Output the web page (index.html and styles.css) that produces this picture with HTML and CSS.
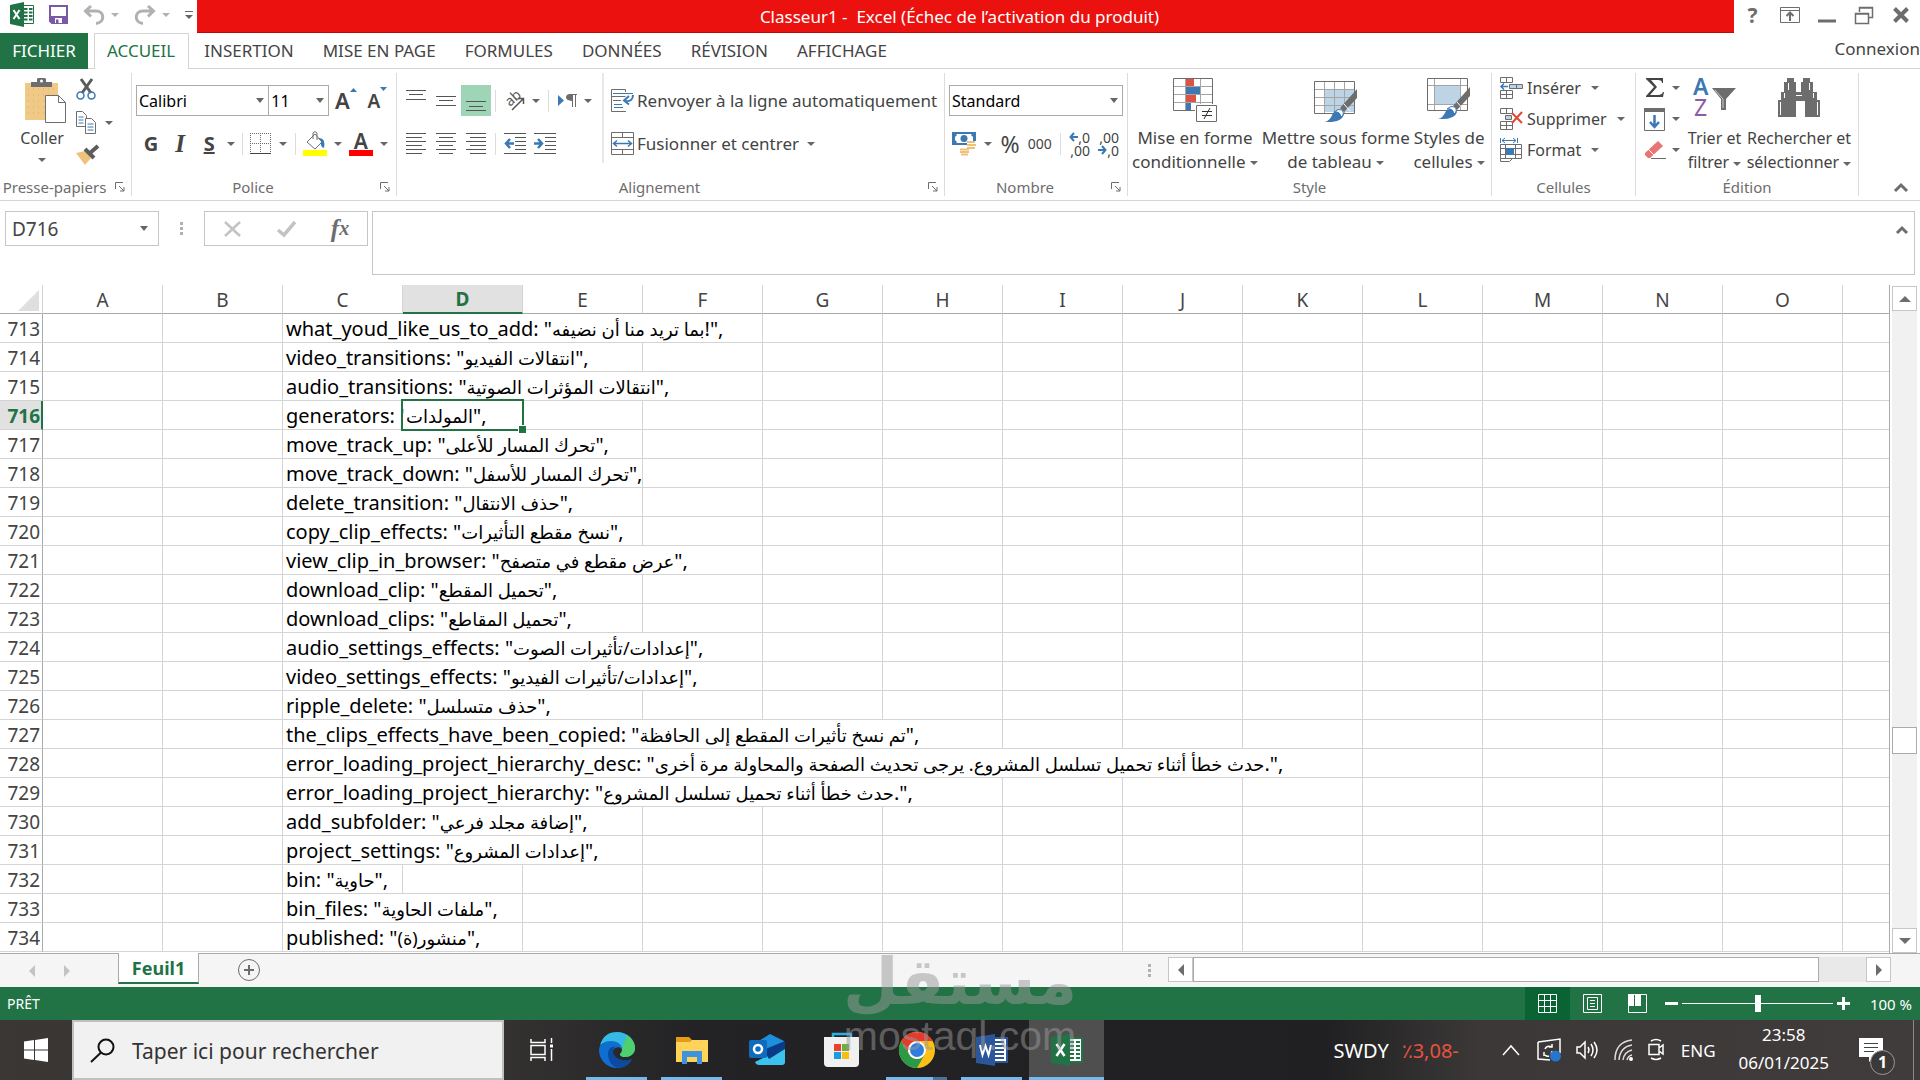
FILE: index.html
```html
<!DOCTYPE html>
<html lang="fr">
<head>
    <meta charset="UTF-8">
    <title>Classeur1 - Excel</title>
    <link rel="stylesheet" href="styles.css">
</head>
<body>
<!-- barre de titre -->
<header class="titlebar">
    <div class="quick">
        <svg width="24" height="25" viewBox="0 0 24 25"><path d="M12 3.500h11.500v18H12z" fill="#fff" stroke="#217346"/><path d="M14 7h3.500M19 7h3.500M14 10.500h3.500M19 10.500h3.500M14 14h3.500M19 14h3.500M14 17.500h3.500M19 17.500h3.500" stroke="#217346" stroke-width="2"/><path d="M0 3l14-3v25L0 22z" fill="#217346"/><path d="M3.500 8l6 9M9.500 8l-6 9" stroke="#fff" stroke-width="2"/></svg>
        <button aria-label="Enregistrer"><svg width="19" height="19" viewBox="0 0 19 19"><path d="M1 1h17v17H3l-2-2z" fill="#fff" stroke="#7b57a8" stroke-width="2"/><path d="M1 11h17v7H3l-2-2z" fill="#7b57a8"/><path d="M6 13h7v5H6z" fill="#fff"/><path d="M7 14.500h2.500V18H7z" fill="#7b57a8"/></svg></button>
        <button aria-label="Annuler"><svg width="22" height="20" viewBox="0 0 22 20"><path d="M3 6h10c9 0 9 12 0 12.500M8 1L2.500 6 8 11.500" fill="none" stroke="#b1b1b1" stroke-width="3"/></svg><i class="caret light"></i></button>
        <button aria-label="Rétablir"><svg width="22" height="20" viewBox="0 0 22 20"><path d="M19 6H9C0 6 0 18 9 18.500M14 1l5.500 5-5.500 5.500" fill="none" stroke="#b1b1b1" stroke-width="3"/></svg><i class="caret light"></i></button>
        <button aria-label="Personnaliser"><svg width="8" height="8" viewBox="0 0 8 8"><path d="M0 .500h8" stroke="#666"/><path d="M0 4h8L4 8z" fill="#666"/></svg></button>
    </div>
    <h1 class="title">Classeur1 - &nbsp;Excel (Échec de l’activation du produit)</h1>
    <div class="winbtns">
        <button class="help" aria-label="Aide">?</button>
        <button aria-label="Options du ruban"><svg width="20" height="16" viewBox="0 0 20 16"><path d="M.5.500h19v15H.5zM.5 3.500h19" fill="none" stroke="#6d6d6d"/><path d="M10 14V6M6.500 9L10 5.500 13.500 9" fill="none" stroke="#6d6d6d" stroke-width="2"/></svg></button>
        <button aria-label="Réduire"><svg width="18" height="16" viewBox="0 0 18 16"><path d="M0 14h18" stroke="#6d6d6d" stroke-width="3"/></svg></button>
        <button aria-label="Restaurer"><svg width="18" height="18" viewBox="0 0 18 18"><path d="M4.500 6V1.500h13v10H14M4.500 2h13M.5 7.500h13v10H.5zM.5 8h13" fill="none" stroke="#6d6d6d" stroke-width="1.500"/></svg></button>
        <button aria-label="Fermer"><svg width="16" height="16" viewBox="0 0 16 16"><path d="M1.500 1.500l13 13M14.500 1.500l-13 13" stroke="#6d6d6d" stroke-width="4"/></svg></button>
    </div>
</header>

<nav class="tabs">
    <a class="file" href="#">FICHIER</a>
    <a class="active" href="#">ACCUEIL</a>
    <a href="#">INSERTION</a>
    <a href="#">MISE EN PAGE</a>
    <a href="#">FORMULES</a>
    <a href="#">DONNÉES</a>
    <a href="#">RÉVISION</a>
    <a href="#">AFFICHAGE</a>
    <a class="login" href="#">Connexion</a>
</nav>

<!-- ruban -->
<div class="ribbon">
    <section class="group g-clip">
        <div class="body">
            <button class="big paste">
                <svg width="42" height="46" viewBox="0 0 42 46"><path d="M0 6h33v37H0z" fill="#f0c987"/><path d="M3 12h28M3 18h28M3 24h16M3 30h16M3 36h16" stroke="#d9ab62" stroke-dasharray="1 4"/><path d="M6 10V5h6V2q0-1 2-1h5q2 0 2 1v3h6v5z" fill="#6d6d6d"/><circle cx="16.500" cy="4" r="1.500" fill="#fff"/><path d="M20.500 18.500h13l7 7v20h-20z" fill="#fff" stroke="#6d6d6d"/><path d="M33.500 18.500v7h7" fill="none" stroke="#6d6d6d"/></svg>
                <span>Coller</span>
                <i class="caret"></i>
            </button>
            <div class="clip-tools">
                <button aria-label="Couper"><svg width="22" height="23" viewBox="0 0 22 23"><path d="M5 1l10 14M16 1L6 15" stroke="#5c5c5c" stroke-width="3"/><circle cx="4.500" cy="17.500" r="3.500" fill="none" stroke="#3c78b4" stroke-width="1.500"/><circle cx="15.500" cy="17.500" r="3.500" fill="none" stroke="#3c78b4" stroke-width="1.500"/></svg></button>
                <button aria-label="Copier"><svg width="22" height="23" viewBox="0 0 22 23"><path d="M.5.500h6l4 4v11H.5z" fill="#fff" stroke="#6d6d6d"/><path d="M2.500 6h5M2.500 9h5M2.500 12h5" stroke="#3c78b4"/><path d="M9.500 7.500h6l4 4v11h-10z" fill="#fff" stroke="#6d6d6d"/><path d="M11.500 13h6M11.500 16h6M11.500 19h6" stroke="#3c78b4"/></svg><i class="caret"></i></button>
                <button aria-label="Reproduire la mise en forme"><svg width="23" height="21" viewBox="0 0 23 21"><path d="M0 9l9-2 6 7-6 7z" fill="#efc27b"/><path d="M9 5l9 9M14 9l8-7" fill="none" stroke="#5c5c5c" stroke-width="4"/></svg></button>
            </div>
        </div>
        <footer><span>Presse-papiers</span><button class="launcher" aria-label="Plus"><svg width="10" height="10" viewBox="0 0 10 10"><path d="M.5 7V.500H8M4 4l5 5M9 5v4H5" fill="none" stroke="#6d6d6d"/></svg></button></footer>
    </section>

    <section class="group g-font">
        <div class="rows">
            <div class="row">
                <select class="s-font" aria-label="Police"><option>Calibri</option></select><select class="s-size" aria-label="Taille"><option>11</option></select>
                <button class="fsize" aria-label="Agrandir la police">A<svg width="7" height="4" viewBox="0 0 7 4"><path d="M0 4h7L3.500 0z" fill="#3c78b4"/></svg></button>
                <button class="fsize small" aria-label="Réduire la police">A<svg width="7" height="4" viewBox="0 0 7 4"><path d="M0 0h7L3.500 4z" fill="#3c78b4"/></svg></button>
            </div>
            <div class="row tight">
                <button class="t b">G</button>
                <button class="t it">I</button>
                <button class="t un">S</button>
                <i class="caret"></i>
                <i class="sep"></i>
                <button aria-label="Bordures"><svg width="22" height="22" viewBox="0 0 22 22"><path d="M.5 0v20M20.500 0v20M0 .500h21M0 10.500h21M10.500 0v20" stroke="#6d6d6d" stroke-dasharray="1 1"/><path d="M0 20.500h21" stroke="#444"/></svg></button>
                <i class="caret"></i>
                <i class="sep"></i>
                <button aria-label="Remplissage"><svg width="24" height="25" viewBox="0 0 24 25"><path d="M4 11l8-8 7 8-7 7z" fill="#fff" stroke="#6d6d6d"/><path d="M10 8V2q2-3 4 0v7" fill="none" stroke="#6d6d6d"/><path d="M15 7q8-1 6 10-4-1-3-7z" fill="#3c78b4"/><path d="M0 19h24v6H0z" fill="#ff0"/></svg></button>
                <i class="caret"></i>
                <button class="fcolor" aria-label="Couleur de police">A</button>
                <i class="caret"></i>
            </div>
        </div>
        <footer><span>Police</span><button class="launcher" aria-label="Plus"><svg width="10" height="10" viewBox="0 0 10 10"><path d="M.5 7V.500H8M4 4l5 5M9 5v4H5" fill="none" stroke="#6d6d6d"/></svg></button></footer>
    </section>

    <section class="group g-align">
        <div class="body">
            <div class="rows left">
                <div class="row">
                    <button class="al" aria-label="Haut"><svg width="20" height="22" viewBox="0 0 20 22"><path d="M0 .500h20M3 4.500h14M0 9.500h20" stroke="#555"/></svg></button>
                    <button class="al" aria-label="Milieu"><svg width="20" height="22" viewBox="0 0 20 22"><path d="M0 6.500h20M3 10.500h14M0 15.500h20" stroke="#555"/></svg></button>
                    <button class="al on" aria-label="Bas"><svg width="20" height="22" viewBox="0 0 20 22"><path d="M0 11.500h20M3 16.500h14M0 20.500h20" stroke="#555"/></svg></button>
                    <i class="sep"></i>
                    <button class="ic" aria-label="Orientation"><svg width="22" height="22" viewBox="0 0 22 22"><text x="0" y="0" transform="translate(6 17) rotate(-42)" font-size="14" fill="#555">ab</text><path d="M8 20L19 9M14 8.500h5.500V14" fill="none" stroke="#555" stroke-width="1.500"/></svg><i class="caret"></i></button>
                    <i class="sep"></i>
                    <button class="ic" aria-label="Sens du texte"><svg width="20" height="14" viewBox="0 0 20 14"><path d="M0 1v11l6-5.500z" fill="#3c78b4"/><path d="M12 0h7v1h-1v12h-1V1h-2v12h-1V7Q8 6 8 3.500 8 0 12 0z" fill="#6d6d6d"/></svg><i class="caret"></i></button>
                </div>
                <div class="row">
                    <button class="al" aria-label="Gauche"><svg width="20" height="22" viewBox="0 0 20 22"><path d="M0 .500h20M0 4.500h16M0 8.500h20M0 12.500h16M0 16.500h20M0 20.500h16" stroke="#555"/></svg></button>
                    <button class="al" aria-label="Centre"><svg width="20" height="22" viewBox="0 0 20 22"><path d="M0 .500h20M3 4.500h14M0 8.500h20M3 12.500h14M0 16.500h20M3 20.500h14" stroke="#555"/></svg></button>
                    <button class="al" aria-label="Droite"><svg width="20" height="22" viewBox="0 0 20 22"><path d="M0 .500h20M4 4.500h16M0 8.500h20M4 12.500h16M0 16.500h20M4 20.500h16" stroke="#555"/></svg></button>
                    <i class="sep"></i>
                    <button class="al" aria-label="Diminuer le retrait"><svg width="22" height="22" viewBox="0 0 22 22"><path d="M0 .500h22M11 4.500h11M11 8.500h11M11 12.500h11M11 16.500h11M0 20.500h22" stroke="#555"/><path d="M10 10.500H3M6 6l-4 4.500L6 15" fill="none" stroke="#3c78b4" stroke-width="2.500"/></svg></button>
                    <button class="al" aria-label="Augmenter le retrait"><svg width="22" height="22" viewBox="0 0 22 22"><path d="M0 .500h22M11 4.500h11M11 8.500h11M11 12.500h11M11 16.500h11M0 20.500h22" stroke="#555"/><path d="M0 10.500h7M4 6l4 4.500L4 15" fill="none" stroke="#3c78b4" stroke-width="2.500"/></svg></button>
                </div>
            </div>
            <div class="rows right">
                <button class="row lbl"><svg width="24" height="24" viewBox="0 0 24 24"><path d="M15 22.500H.5V.500h14V3M.5 7.500h14" fill="none" stroke="#6d6d6d"/><path d="M2 4.500h20" stroke="#3c78b4"/><path d="M3 15.500h8M3 18.500h9" stroke="#3c78b4"/><path d="M2 11.500h8" stroke="#6d6d6d"/><path d="M22 6q0 7-8 6M18 7l-5 4.500 5 4" fill="none" stroke="#3c78b4" stroke-width="2"/></svg>Renvoyer à la ligne automatiquement</button>
                <button class="row lbl"><svg width="24" height="24" viewBox="0 0 24 24"><path d="M.5.500h22v22H.5zM.5 5.500h22M.5 17.500h22M11.500 0v5M11.500 18v5" fill="none" stroke="#6d6d6d"/><path d="M3 11.500h17M6 8.500l-3.500 3L6 14.500M17 8.500l3.500 3-3.500 3" fill="none" stroke="#3c78b4" stroke-width="1.500"/></svg>Fusionner et centrer<i class="caret"></i></button>
            </div>
        </div>
        <footer><span>Alignement</span><button class="launcher" aria-label="Plus"><svg width="10" height="10" viewBox="0 0 10 10"><path d="M.5 7V.500H8M4 4l5 5M9 5v4H5" fill="none" stroke="#6d6d6d"/></svg></button></footer>
    </section>

    <section class="group g-num">
        <div class="rows">
            <div class="row"><select class="s-num" aria-label="Format de nombre"><option>Standard</option></select></div>
            <div class="row tight num">
                <button aria-label="Format monétaire"><svg width="24" height="24" viewBox="0 0 24 24"><path d="M0 0h24v13H0z" fill="#3c78b4"/><path d="M3 2h18v9H3z" fill="#fff"/><path d="M1 1l3 3M23 1l-3 3M1 12l3-3" stroke="#3c78b4" stroke-width="3"/><circle cx="12" cy="6.500" r="3.500" fill="#3c78b4"/><path d="M15 9h9v9h-9zM8 16h9v7H8z" fill="#fff"/><path d="M15 10h8M15 13h9M15 16h8M8 17.500h9M8 20h9M9 22.500h7" stroke="#efc078" stroke-width="2"/></svg></button>
                <i class="caret"></i>
                <button class="pct">%</button>
                <button class="mil">000</button>
                <i class="sep"></i>
                <button class="dec" aria-label="Ajouter une décimale"><span><svg width="9" height="8" viewBox="0 0 9 8"><path d="M9 4H2M5 0L1.500 4 5 8" fill="none" stroke="#3c78b4" stroke-width="2"/></svg>,0</span><span>,00</span></button>
                <button class="dec" aria-label="Réduire les décimales"><span>,00</span><span><svg width="9" height="8" viewBox="0 0 9 8"><path d="M0 4h7M4 0l3.500 4L4 8" fill="none" stroke="#3c78b4" stroke-width="2"/></svg>,0</span></button>
            </div>
        </div>
        <footer><span>Nombre</span><button class="launcher" aria-label="Plus"><svg width="10" height="10" viewBox="0 0 10 10"><path d="M.5 7V.500H8M4 4l5 5M9 5v4H5" fill="none" stroke="#6d6d6d"/></svg></button></footer>
    </section>

    <section class="group g-style">
        <div class="body">
            <button class="big">
                <svg width="44" height="46" viewBox="0 0 44 46"><path d="M.5 1.500h39v32H.5z" fill="#fff"/><path d="M.5 9.500h39M.5 17.500h39M.5 25.500h39M12.500 1v33M27.500 1v33" stroke="#a5a5a5"/><path d="M13 2h8v7h-8zM13 18h10v7H13z" fill="#dd5240"/><path d="M13 10h14v7H13zM13 26h5v7h-5z" fill="#3c78b4"/><path d="M.5 1.500h39v32H.5z" fill="none" stroke="#6d6d6d"/><path d="M22 27h22v19H22z" fill="#fff"/><path d="M23.500 28.500h20v16h-20z" fill="#fff" stroke="#6d6d6d"/><path d="M29 34.500h10M29 38.500h10M37 31l-6 11" stroke="#333"/></svg>
                <span>Mise en forme</span><span>conditionnelle <i class="caret"></i></span>
            </button>
            <button class="big">
                <svg width="44" height="46" viewBox="0 0 44 46"><path d="M10 12h30v23H10z" fill="#bdd3e6"/><path d="M.5 12.500h40M.5 20.500h40M.5 28.500h40M10.500 4v32M20.500 4v32M30.500 4v32" stroke="#a5a5a5"/><path d="M.5 4.500h40v32H.5z" fill="none" stroke="#6d6d6d"/><path d="M43 12v9L30 35l-4-4z" fill="#6d6d6d"/><path d="M30 27l6 7" stroke="#fff"/><path d="M11 45q5-1 8-9 7-6 11 1-2 9-19 8z" fill="#3c78b4"/><path d="M20 35q4-4 8-2 3 4-1 7-1-6-7-5z" fill="#fff" stroke="#3c78b4"/></svg>
                <span>Mettre sous forme</span><span>de tableau <i class="caret"></i></span>
            </button>
            <button class="big">
                <svg width="44" height="46" viewBox="0 0 44 46"><path d="M8 9h25v18H8z" fill="#bdd3e6"/><path d="M.5 8.500h40M.5 27.500h40M7.500 2v32M33.500 2v32" stroke="#a5a5a5"/><path d="M.5 1.500h40v32H.5z" fill="none" stroke="#6d6d6d"/><path d="M43 10v9L30 33l-4-4z" fill="#6d6d6d"/><path d="M30 25l6 7" stroke="#fff"/><path d="M11 42q5-1 8-8 7-6 11 1-2 8-19 7z" fill="#3c78b4"/><path d="M20 32q4-4 8-2 3 4-1 7-1-6-7-5z" fill="#fff" stroke="#3c78b4"/></svg>
                <span>Styles de</span><span>cellules <i class="caret"></i></span>
            </button>
        </div>
        <footer><span>Style</span></footer>
    </section>

    <section class="group g-cells">
        <div class="list">
            <button><svg width="23" height="23" viewBox="0 0 23 23"><path d="M.5.500h12v5H.5zM6.500 0v6M.5 13.500h12v8H.5zM6.500 13v9M0 17.500h12" fill="none" stroke="#6d6d6d"/><path d="M9.500 7.500h13v4h-13zM16.500 7v5" fill="#bdd3e6" stroke="#6d6d6d"/><path d="M8 9.500H1M4 6.500l-3 3 3 3" fill="none" stroke="#3c78b4" stroke-width="1.500"/></svg>Insérer<i class="caret"></i></button>
            <button><svg width="23" height="23" viewBox="0 0 23 23"><path d="M.5.500h12v5H.5zM6.500 0v6M.5 13.500h12v8H.5zM6.500 13v9M0 17.500h12" fill="none" stroke="#6d6d6d"/><path d="M5.500 7.500h6v4h-6z" fill="#bdd3e6" stroke="#6d6d6d"/><path d="M12 5l10 10M22 4L12 15" stroke="#e04a35" stroke-width="2"/></svg>Supprimer<i class="caret"></i></button>
            <button><svg width="23" height="24" viewBox="0 0 23 24"><path d="M.5 0v5M17.500 0v5M2 2.500h14M5 0L2 2.500 5 5M13 0l3 2.500L13 5" fill="none" stroke="#3c78b4"/><path d="M.5 6.500h21v14H.5zM5.500 6v14M15.500 6v14M0 10.500h21M0 16.500h21" fill="none" stroke="#6d6d6d"/><path d="M6 10h8v7H6z" fill="#3c78b4"/><path d="M.5 21v2.500h9l3-3" fill="none" stroke="#6d6d6d"/></svg>Format<i class="caret"></i></button>
        </div>
        <footer><span>Cellules</span></footer>
    </section>

    <section class="group g-edit">
        <div class="body">
            <div class="list">
                <button aria-label="Somme"><svg width="22" height="22" viewBox="0 0 22 22"><path d="M2 1h17v5h-1q0-3-4-3H7l6 7-7 8h8q4 0 5-3h1l-1 5H2v-1l8-9-8-8z" fill="#444"/></svg><i class="caret"></i></button>
                <button aria-label="Remplissage"><svg width="22" height="23" viewBox="0 0 22 23"><path d="M.5.500h20v22H.5z" fill="#fff" stroke="#6d6d6d"/><path d="M0 0h21v4H0z" fill="#6d6d6d"/><path d="M10.500 7v12M6 14l4.500 5 4.500-5" fill="none" stroke="#3c78b4" stroke-width="2.500"/></svg><i class="caret"></i></button>
                <button aria-label="Effacer"><svg width="22" height="20" viewBox="0 0 22 20"><path d="M1 13L14 1l5 5L6 18H4l-3-3z" fill="#e87474"/><path d="M4 9l6 6" stroke="#fff"/><path d="M7 18.500h15" stroke="#6d6d6d"/></svg><i class="caret"></i></button>
            </div>
            <button class="big az">
                <svg width="44" height="46" viewBox="0 0 44 46"><text x="0" y="18" font-size="23" font-weight="600" fill="#3c78b4">A</text><text x="1" y="39" font-size="23" fill="#8d5ba5">Z</text><path d="M19 11h24L33 22v11h-5V22z" fill="#6d6d6d"/><path d="M22 13l8 9v9" fill="none" stroke="#ccc"/></svg>
                <span>Trier et</span><span>filtrer <i class="caret"></i></span>
            </button>
            <button class="big find">
                <svg width="44" height="46" viewBox="0 0 44 46"><path d="M10 1h7v4h2v10h5V5h2V1h7v4h3v10h4v8h3v17H28V24h-4-5v16H1V23h3v-8h3V5h3z" fill="#6d6d6d"/><path d="M3.500 25v13M40.500 25v13M7.500 16v5M36.500 16v5M11.500 6v7M32.500 6v7M19 18.500h6" stroke="#fff"/></svg>
                <span>Rechercher et</span><span>sélectionner <i class="caret"></i></span>
            </button>
        </div>
        <footer><span>Édition</span></footer>
    </section>
    <button class="collapse" aria-label="Réduire le ruban"><svg width="14" height="9" viewBox="0 0 14 9"><path d="M1 8l6-6 6 6" fill="none" stroke="#6d6d6d" stroke-width="3"/></svg></button>
</div>

<!-- barre de formule -->
<div class="formulabar">
    <select class="namebox" aria-label="Zone Nom"><option>D716</option></select>
    <i class="dots"></i>
    <div class="fbtns">
        <button aria-label="Annuler"><svg width="17" height="16" viewBox="0 0 17 16"><path d="M1 1l15 14M16 1L1 15" stroke="#c3c3c3" stroke-width="2.500"/></svg></button>
        <button aria-label="Entrer"><svg width="19" height="16" viewBox="0 0 19 16"><path d="M1 9l6 5L18 1" fill="none" stroke="#c3c3c3" stroke-width="3.500"/></svg></button>
        <button class="fx" aria-label="Insérer une fonction">f<small>x</small></button>
    </div>
    <div class="finput">
        <textarea aria-label="Barre de formule"></textarea>
        <button aria-label="Réduire la barre"><svg width="12" height="9" viewBox="0 0 12 9"><path d="M1 8l5-5 5 5" fill="none" stroke="#6d6d6d" stroke-width="3"/></svg></button>
    </div>
</div>

<!-- feuille -->
<main class="sheet">
    <div class="grid">
        <table>
            <colgroup><col class="c-num"><col span="15" class="c-cell"><col></colgroup>
            <thead>
            <tr><th class="corner"><svg width="21" height="21" viewBox="0 0 21 21"><path d="M21 0v21H0z" fill="#dfdfdf"/></svg></th><th>A</th><th>B</th><th>C</th><th class="sel">D</th><th>E</th><th>F</th><th>G</th><th>H</th><th>I</th><th>J</th><th>K</th><th>L</th><th>M</th><th>N</th><th>O</th><th></th></tr>
            </thead>
            <tbody>
            <tr><th>713</th><td></td><td></td><td colspan="4">what_youd_like_us_to_add: "<span class="ar">بما تريد منا أن نضيفه</span>!",</td><td></td><td></td><td></td><td></td><td></td><td></td><td></td><td></td><td></td><td></td></tr>
            <tr><th>714</th><td></td><td></td><td colspan="3">video_transitions: "<span class="ar">انتقالات الفيديو</span>",</td><td></td><td></td><td></td><td></td><td></td><td></td><td></td><td></td><td></td><td></td><td></td></tr>
            <tr><th>715</th><td></td><td></td><td colspan="4">audio_transitions: "<span class="ar">انتقالات المؤثرات الصوتية</span>",</td><td></td><td></td><td></td><td></td><td></td><td></td><td></td><td></td><td></td><td></td></tr>
            <tr><th class="sel">716</th><td></td><td></td><td>generators: '</td><td class="cursor"><span class="ar">المولدات</span>",</td><td></td><td></td><td></td><td></td><td></td><td></td><td></td><td></td><td></td><td></td><td></td><td></td></tr>
            <tr><th>717</th><td></td><td></td><td colspan="3">move_track_up: "<span class="ar">تحرك المسار للأعلى</span>",</td><td></td><td></td><td></td><td></td><td></td><td></td><td></td><td></td><td></td><td></td><td></td></tr>
            <tr><th>718</th><td></td><td></td><td colspan="3">move_track_down: "<span class="ar">تحرك المسار للأسفل</span>",</td><td></td><td></td><td></td><td></td><td></td><td></td><td></td><td></td><td></td><td></td><td></td></tr>
            <tr><th>719</th><td></td><td></td><td colspan="3">delete_transition: "<span class="ar">حذف الانتقال</span>",</td><td></td><td></td><td></td><td></td><td></td><td></td><td></td><td></td><td></td><td></td><td></td></tr>
            <tr><th>720</th><td></td><td></td><td colspan="3">copy_clip_effects: "<span class="ar">نسخ مقطع التأثيرات</span>",</td><td></td><td></td><td></td><td></td><td></td><td></td><td></td><td></td><td></td><td></td><td></td></tr>
            <tr><th>721</th><td></td><td></td><td colspan="4">view_clip_in_browser: "<span class="ar">عرض مقطع في متصفح</span>",</td><td></td><td></td><td></td><td></td><td></td><td></td><td></td><td></td><td></td><td></td></tr>
            <tr><th>722</th><td></td><td></td><td colspan="3">download_clip: "<span class="ar">تحميل المقطع</span>",</td><td></td><td></td><td></td><td></td><td></td><td></td><td></td><td></td><td></td><td></td><td></td></tr>
            <tr><th>723</th><td></td><td></td><td colspan="3">download_clips: "<span class="ar">تحميل المقاطع</span>",</td><td></td><td></td><td></td><td></td><td></td><td></td><td></td><td></td><td></td><td></td><td></td></tr>
            <tr><th>724</th><td></td><td></td><td colspan="4">audio_settings_effects: "<span class="ar">إعدادات/تأثيرات الصوت</span>",</td><td></td><td></td><td></td><td></td><td></td><td></td><td></td><td></td><td></td><td></td></tr>
            <tr><th>725</th><td></td><td></td><td colspan="4">video_settings_effects: "<span class="ar">إعدادات/تأثيرات الفيديو</span>",</td><td></td><td></td><td></td><td></td><td></td><td></td><td></td><td></td><td></td><td></td></tr>
            <tr><th>726</th><td></td><td></td><td colspan="3">ripple_delete: "<span class="ar">حذف متسلسل</span>",</td><td></td><td></td><td></td><td></td><td></td><td></td><td></td><td></td><td></td><td></td><td></td></tr>
            <tr><th>727</th><td></td><td></td><td colspan="6">the_clips_effects_have_been_copied: "<span class="ar">تم نسخ تأثيرات المقطع إلى الحافظة</span>",</td><td></td><td></td><td></td><td></td><td></td><td></td><td></td><td></td></tr>
            <tr><th>728</th><td></td><td></td><td colspan="9">error_loading_project_hierarchy_desc: "<span class="ar">حدث خطأ أثناء تحميل تسلسل المشروع. يرجى تحديث الصفحة والمحاولة مرة أخرى</span>.",</td><td></td><td></td><td></td><td></td><td></td></tr>
            <tr><th>729</th><td></td><td></td><td colspan="6">error_loading_project_hierarchy: "<span class="ar">حدث خطأ أثناء تحميل تسلسل المشروع</span>.",</td><td></td><td></td><td></td><td></td><td></td><td></td><td></td><td></td></tr>
            <tr><th>730</th><td></td><td></td><td colspan="3">add_subfolder: "<span class="ar">إضافة مجلد فرعي</span>",</td><td></td><td></td><td></td><td></td><td></td><td></td><td></td><td></td><td></td><td></td><td></td></tr>
            <tr><th>731</th><td></td><td></td><td colspan="3">project_settings: "<span class="ar">إعدادات المشروع</span>",</td><td></td><td></td><td></td><td></td><td></td><td></td><td></td><td></td><td></td><td></td><td></td></tr>
            <tr><th>732</th><td></td><td></td><td>bin: "<span class="ar">حاوية</span>",</td><td></td><td></td><td></td><td></td><td></td><td></td><td></td><td></td><td></td><td></td><td></td><td></td><td></td></tr>
            <tr><th>733</th><td></td><td></td><td colspan="2">bin_files: "<span class="ar">ملفات الحاوية</span>",</td><td></td><td></td><td></td><td></td><td></td><td></td><td></td><td></td><td></td><td></td><td></td><td></td></tr>
            <tr><th>734</th><td></td><td></td><td colspan="2">published: "<span class="ar">منشور(ة)</span>",</td><td></td><td></td><td></td><td></td><td></td><td></td><td></td><td></td><td></td><td></td><td></td><td></td></tr>
            </tbody>
        </table>
    </div>
    <div class="vscroll">
        <button aria-label="Haut"><svg width="12" height="6" viewBox="0 0 12 6"><path d="M0 6h12L6 0z" fill="#6d6d6d"/></svg></button>
        <div class="track"><div class="thumb"></div></div>
        <button aria-label="Bas"><svg width="12" height="6" viewBox="0 0 12 6"><path d="M0 0h12L6 6z" fill="#6d6d6d"/></svg></button>
    </div>
</main>

<div class="sheetbar">
    <div class="sheetnav">
        <button aria-label="Précédent"><svg width="6" height="12" viewBox="0 0 6 12"><path d="M6 0v12L0 6z" fill="#c3c3c3"/></svg></button>
        <button aria-label="Suivant"><svg width="6" height="12" viewBox="0 0 6 12"><path d="M0 0v12l6-6z" fill="#c3c3c3"/></svg></button>
    </div>
    <a class="sheettab" href="#">Feuil1</a>
    <button class="add" aria-label="Nouvelle feuille"><svg width="24" height="24" viewBox="0 0 24 24"><circle cx="12" cy="12" r="10.500" fill="none" stroke="#6d6d6d"/><path d="M12 7v10M7 12h10" stroke="#6d6d6d" stroke-width="2"/></svg></button>
    <i class="dots"></i>
    <div class="hscroll">
        <button aria-label="Gauche"><svg width="6" height="12" viewBox="0 0 6 12"><path d="M6 0v12L0 6z" fill="#6d6d6d"/></svg></button>
        <div class="track"><div class="thumb"></div></div>
        <button aria-label="Droite"><svg width="6" height="12" viewBox="0 0 6 12"><path d="M0 0v12l6-6z" fill="#6d6d6d"/></svg></button>
    </div>
</div>

<div class="statusbar">
    <span>PRÊT</span>
    <div class="views">
        <button class="on" aria-label="Normal"><svg width="19" height="19" viewBox="0 0 19 19"><path d="M.5.500h18v18H.5zM6.500 0v19M12.500 0v19M0 6.500h19M0 12.500h19" fill="none" stroke="#fff"/></svg></button>
        <button aria-label="Mise en page"><svg width="19" height="19" viewBox="0 0 19 19"><path d="M.5.500h18v18H.5zM4.500 3.500h10v12h-10zM7 6.500h5M7 9.500h5M7 12.500h5" fill="none" stroke="#fff"/></svg></button>
        <button aria-label="Sauts de page"><svg width="19" height="19" viewBox="0 0 19 19"><path d="M.5.500h18v18H.5z" fill="none" stroke="#fff"/><path d="M0 0h6v12H0zM7 0h6v12H7z" fill="#fff"/></svg></button>
    </div>
    <div class="zoom">
        <button aria-label="Zoom arrière"><svg width="13" height="13" viewBox="0 0 13 13"><path d="M0 6.500h13" stroke="#fff" stroke-width="3"/></svg></button>
        <input type="range" aria-label="Zoom" min="0" max="100" value="50">
        <button aria-label="Zoom avant"><svg width="13" height="13" viewBox="0 0 13 13"><path d="M0 6.500h13M6.500 0v13" stroke="#fff" stroke-width="3"/></svg></button>
    </div>
    <span class="pc">100 %</span>
</div>

<!-- barre des tâches -->
<div class="taskbar">
    <button class="start" aria-label="Démarrer"><svg width="24" height="24" viewBox="0 0 24 24"><path d="M0 3.500L10 2v9.500H0zM11 1.900L24 0v11.500H11zM0 12.500h10V22L0 20.500zM11 12.500h13V24l-13-1.900z" fill="#fff"/></svg></button>
    <label class="search"><svg width="25" height="25" viewBox="0 0 25 25"><circle cx="16" cy="9" r="7.500" fill="none" stroke="#111" stroke-width="2"/><path d="M11 14.500L1 24" stroke="#111" stroke-width="2"/></svg><input type="text" placeholder="Taper ici pour rechercher" aria-label="Rechercher"></label>
    <button class="taskview" aria-label="Affichage des tâches"><svg width="24" height="24" viewBox="0 0 24 24"><path d="M1 1v3.500h14V1M1 7.500h14v9H1zM1 23v-3.500h14V23M21.500 0v5M21.500 11v12" fill="none" stroke="#fff" stroke-width="1.500"/><path d="M20 6.500h3v3h-3z" fill="#fff"/></svg></button>
    <div class="apps">
        <button class="open" aria-label="Edge"><svg width="36" height="36" viewBox="0 0 36 36"><path d="M1 13Q5 0 18 0c11 0 18 8 18 16 0 6-5 9-10 9-4 0-5-2-5-3 1-1 2-2 2-4 0-5-5-8-10-8C7 10 3 12 1 13z" fill="#35b9e6"/><path d="M27 3c6 3 9 8 9 13 0 6-5 9-10 9-4 0-5-2-5-3 1-1 2-2 2-4 0-6 5-9 4-15z" fill="#4fd06f"/><path d="M0 18c0-6 6-9 12-9 7 0 11 4 11 8-4-4-11-1-9 6 2 6 11 8 19 4-3 6-9 9-15 9C8 36 0 28 0 18z" fill="#0f6fd0"/><path d="M9 22c0-5 3-7 7-8-3 4-2 9 1 11 4 4 11 4 16 2-3 6-9 9-15 9-5-2-9-7-9-14z" fill="#0c4aa0"/></svg></button>
        <button class="open" aria-label="Explorateur"><svg width="32" height="28" viewBox="0 0 32 28"><path d="M0 1h13l3 3h16v8H0z" fill="#e69a17"/><path d="M0 6h14l2-2h16v22H0z" fill="#ffd25a"/><path d="M6 28V15h20v13h-5v-7H11v7z" fill="#3d93e0"/></svg></button>
        <button aria-label="Outlook"><svg width="36" height="32" viewBox="0 0 36 32"><path d="M8 8L21 0l14 7v8L16 24H8z" fill="#1d8fdd"/><path d="M36 13v15q0 3-3 3H10q-3 0-4-3z" fill="#39c3ee"/><path d="M14 16l22-9v8L20 25z" fill="#0a3c86"/><rect y="6" width="18" height="18" rx="2" fill="#0f6cbd"/><circle cx="9" cy="15" r="4" fill="none" stroke="#fff" stroke-width="2.500"/></svg></button>
        <button aria-label="Store"><svg width="36" height="36" viewBox="0 0 36 36"><path d="M9 6V2h18v4" fill="none" stroke="#29b0e8" stroke-width="2.500"/><path d="M0 5h35v26q0 4-4 4H4q-4 0-4-4z" fill="#f0f0f0"/><path d="M10 12h7v7h-7z" fill="#e8412c"/><path d="M18 12h7v7h-7z" fill="#6fae3a"/><path d="M10 20h7v7h-7z" fill="#1a9ce0"/><path d="M18 20h7v7h-7z" fill="#fbbc12"/></svg></button>
        <button class="open more" aria-label="Chrome"><svg width="36" height="36" viewBox="0 0 36 36"><circle cx="18" cy="18" r="18" fill="#fbc116"/><path d="M2.400 9A18 18 0 0 1 33.600 9H18a9 9 0 0 0-7.800 13.500z" fill="#e33b2e"/><path d="M2.400 9a18 18 0 0 0 15.600 27l7.800-13.500A9 9 0 0 1 10.200 22.500z" fill="#2a9a48"/><circle cx="18" cy="18" r="9" fill="#fff"/><circle cx="18" cy="18" r="7" fill="#2f7de0"/></svg></button>
        <button class="open" aria-label="Word"><svg width="32" height="32" viewBox="0 0 32 32"><path d="M17 4h14v24H17z" fill="#fff" stroke="#2b579a" stroke-width="2"/><path d="M18 8h10M18 12h10M18 16h10M18 20h10M18 24h10" stroke="#2b579a" stroke-width="2"/><path d="M0 3l19-3v32L0 29z" fill="#2b579a"/><path d="M4 11l2.500 10L9.500 12l3 9L15 11" fill="none" stroke="#fff" stroke-width="2"/></svg></button>
        <button class="open current" aria-label="Excel"><svg width="32" height="32" viewBox="0 0 32 32"><path d="M17 4h14v24H17z" fill="#fff" stroke="#217346" stroke-width="2"/><path d="M19 8h4M25 8h4M19 12h4M25 12h4M19 16h4M25 16h4M19 20h4M25 20h4M19 24h4M25 24h4" stroke="#217346" stroke-width="2"/><path d="M0 3l19-3v32L0 29z" fill="#217346"/><path d="M5.500 10l8 12M13.500 10l-8 12" stroke="#fff" stroke-width="2.500"/></svg></button>
    </div>
    <a class="stock" href="#">SWDY <b>٪3,08-</b></a>
    <div class="tray">
        <button aria-label="Icônes cachées"><svg width="18" height="12" viewBox="0 0 18 12"><path d="M1 11l8-9 8 9" fill="none" stroke="#fff" stroke-width="1.500"/></svg></button>
        <button aria-label="Synchronisation"><svg width="24" height="24" viewBox="0 0 24 24"><path d="M1 4l22-3v14M1 4v17l12 1" fill="none" stroke="#fff" stroke-width="1.500"/><path d="M8 11q2-4 7-2M15 6v3h-3M8 17q2 2 4 1M7 14v4M15 13q0 2-1 3" fill="none" stroke="#fff" stroke-width="1.500"/><circle cx="18.500" cy="18" r="5.500" fill="#2477cc"/></svg></button>
        <button aria-label="Volume"><svg width="23" height="20" viewBox="0 0 23 20"><path d="M1 7h3l5-5v16l-5-5H1zM12 7q2 3 0 6M15 4q4 6 0 12M18 2q6 8 0 16" fill="none" stroke="#fff" stroke-width="1.500"/></svg></button>
        <button aria-label="Réseau"><svg width="19" height="22" viewBox="0 0 19 22"><path d="M1 21Q1 3 18 1M5 21Q6 8 18 6M9 21q1-8 9-10M13 21q1-4 5-5" fill="none" stroke="#ddd" stroke-width="1.500"/><circle cx="17" cy="20" r="2" fill="#fff"/></svg></button>
        <button aria-label="Réunion"><svg width="16" height="24" viewBox="0 0 16 24"><path d="M1 6.500h10v10H1zM11 10l4-3v9l-4-3M3 3q5-3 10 0M3 20q5 3 10 0" fill="none" stroke="#fff" stroke-width="1.500"/></svg></button>
        <span class="lang">ENG</span>
        <div class="clock"><span>23:58</span><span>06/01/2025</span></div>
        <button class="notif" aria-label="Notifications"><svg width="24" height="25" viewBox="0 0 24 25"><path d="M0 0h24v19h-9l-5 5v-5H0z" fill="#fff"/><path d="M5 5.500h14M5 9.500h14M5 13.500h10" stroke="#444"/></svg><b>1</b></button>
    </div>
    <i class="desktop"></i>
</div>

<div class="watermark"><span class="wm-ar" lang="ar">مستقل</span><span class="wm-la">mostaql.com</span></div>
</body>
</html>
```
FILE: styles.css
```css
*{
    box-sizing: border-box;
}
body{
    margin: 0;
    height: 100vh;
    display: flex;
    flex-direction: column;
    overflow: hidden;
    background-color: #fff;
    color: #444;
    font-family: "Noto Sans", "DejaVu Sans", sans-serif;
    font-size: 16px;
}
button{
    margin: 0;
    padding: 0;
    border: 0;
    background: none;
    color: inherit;
    font: inherit;
    white-space: nowrap;
    display: flex;
    align-items: center;
    justify-content: center;
}
a{
    color: inherit;
    text-decoration: none;
}
svg{
    display: block;
    flex: none;
    overflow: visible;
}
select{
    appearance: none;
    height: 31px;
    margin: 0;
    padding: 0 2px;
    border: 1px solid #ababab;
    border-radius: 0;
    background: #fff url("data:image/svg+xml,%3Csvg xmlns='http://www.w3.org/2000/svg' width='8' height='5'%3E%3Cpath d='M0 0h8L4 5z' fill='%23666'/%3E%3C/svg%3E") no-repeat right 4px center;
    color: #000;
    font: inherit;
}
.caret{
    flex: none;
    display: inline-block;
    border: 4px solid transparent;
    border-top-color: #666;
    border-bottom: 0;
    vertical-align: middle;
}
.caret.light{
    border-top-color: #b1b1b1;
}
.sep{
    width: 1px;
    height: 22px;
    background-color: #dcdcdc;
}

/* titre */
.titlebar{
    flex: none;
    display: flex;
    height: 33px;
}
.quick{
    width: 197px;
    padding: 0 0 4px 10px;
    display: flex;
    align-items: center;
    gap: 15px;
}
.quick button{
    gap: 6px;
}
.title{
    flex: 1;
    margin: 0;
    padding-right: 12px;
    background-color: #eb110f;
    border-bottom: 1px solid #b80b0a;
    color: #fff;
    font-size: 17px;
    font-weight: normal;
    line-height: 33px;
    text-align: center;
}
.winbtns{
    width: 186px;
    display: flex;
    padding: 0 0 4px;
}
.winbtns button{
    flex: 1;
}
.winbtns .help{
    color: #6d6d6d;
    font-size: 21px;
    font-weight: bold;
}

/* onglets */
.tabs{
    flex: none;
    display: flex;
    height: 36px;
    border-bottom: 1px solid #d4d4d4;
    font-size: 17px;
    line-height: 36px;
    white-space: nowrap;
}
.tabs a{
    padding: 0 14px 0 15px;
}
.tabs .file{
    width: 88px;
    height: 36px;
    padding: 0;
    background-color: #217346;
    color: #fff;
    text-align: center;
}
.tabs .active{
    height: 36px;
    margin-left: 6px;
    padding: 0 13px 0 12px;
    border: 1px solid #d4d4d4;
    border-bottom: 0;
    background-color: #fff;
    color: #217346;
    line-height: 34px;
}
.tabs .login{
    margin-left: auto;
    padding: 0;
    line-height: 32px;
}

/* ruban */
.ribbon{
    flex: none;
    display: flex;
    height: 132px;
    padding: 4px 0;
    border-bottom: 1px solid #d4d4d4;
}
.group{
    flex: none;
    display: flex;
    flex-direction: column;
    justify-content: space-between;
    border-right: 1px solid #dcdcdc;
}
.g-clip{ width: 132px; }
.g-font{ width: 265px; }
.g-align{ width: 548px; }
.g-num{ width: 183px; }
.g-style{ width: 364px; }
.g-cells{ width: 144px; }
.g-edit{ width: 223px; }
.group footer{
    display: flex;
    align-items: center;
    height: 18px;
    color: #6d6d6d;
    font-size: 15px;
    line-height: 18px;
}
.group footer span{
    flex: 1;
    text-align: center;
}
.launcher{
    width: 22px;
}
.body{
    display: flex;
}
.rows{
    display: flex;
    flex-direction: column;
    gap: 12px;
    padding: 12px 4px 0;
}
.row{
    display: flex;
    align-items: center;
    height: 31px;
}
.big{
    flex-direction: column;
    justify-content: flex-start;
    padding-top: 4px;
    line-height: 24px;
}
.big svg{
    margin-bottom: 3px;
}
.paste{
    width: 68px;
    padding-left: 16px;
}
.paste svg{
    margin-left: 8px;
}
.paste .caret{
    margin-top: 8px;
}
.clip-tools{
    padding: 5px 0 0 8px;
    display: flex;
    flex-direction: column;
    gap: 10px;
}
.clip-tools button{
    gap: 7px;
    justify-content: flex-start;
}
.s-font{ width: 136px; }
.s-size{
    width: 62px;
    margin-left: -1px;
}
.g-font .rows{
    padding: 12px 4px 0 4px;
}
.s-num{ width: 175px; }
.fsize{
    width: 30px;
    margin-left: 2px;
    font-size: 22px;
    font-weight: 600;
    align-items: flex-start;
    line-height: 33px;
}
.fsize.small{
    font-size: 19px;
    line-height: 36px;
}
.fsize svg{
    margin-top: 4px;
}
.tight{
    justify-content: space-between;
    padding: 0 4px;
}
.num{
    padding: 0 4px 0 3px;
}
.t{
    width: 22px;
    font-size: 20px;
    font-weight: bold;
}
.it{
    font-family: "Liberation Serif", serif;
    font-style: italic;
    font-size: 25px;
}
.un{
    text-decoration: underline;
}
.fcolor{
    width: 24px;
    height: 24px;
    border-bottom: 6px solid #f00;
    font-size: 21px;
    font-weight: 600;
    line-height: 18px;
}
.al{
    width: 30px;
    height: 31px;
}
.al.on{
    background-color: #9fd5b7;
}
.left{
    width: 207px;
    border-right: 2px solid #e8e8e8;
    height: 90px;
}
.left .sep{
    margin: 0 4px;
}
.ic{
    gap: 6px;
    width: 44px;
}
.right{
    padding: 12px 0 0 7px;
}
.lbl{
    gap: 2px;
    justify-content: flex-start;
    font-size: 17px;
}
.lbl .caret{
    margin-left: 6px;
}
.pct{
    font-size: 23px;
}
.mil{
    font-size: 14px;
}
.dec{
    flex-direction: column;
    font-size: 14px;
    line-height: 13px;
    align-items: flex-end;
}
.dec span{
    display: flex;
    align-items: center;
}
.g-style .body{
    justify-content: space-between;
    padding: 0 6px 0 4px;
    font-size: 17px;
}
.list{
    display: flex;
    flex-direction: column;
    gap: 7px;
    padding: 3px 0 0 8px;
}
.list button{
    height: 24px;
    justify-content: flex-start;
    gap: 4px;
}
.list .caret{
    margin-left: 6px;
}
.g-edit .list{
    width: 48px;
}
.g-edit .list .caret{
    margin-left: 2px;
}
.az{
    width: 61px;
}
.find{
    width: 108px;
}
.collapse{
    margin-left: auto;
    width: 38px;
    height: 18px;
    align-self: flex-end;
}

/* formule */
.formulabar{
    flex: none;
    display: flex;
    align-items: flex-start;
    height: 84px;
    padding: 10px 5px 10px 5px;
}
.namebox{
    width: 154px;
    height: 35px;
    padding-left: 6px;
    border-color: #c6c6c6;
    background-position: right 10px center;
    color: #444;
    font-size: 19px;
}
.dots{
    width: 3px;
    height: 13px;
    margin: 11px 21px;
    background: repeating-linear-gradient(#b1b1b1 0 3px, transparent 3px 5px);
}
.fbtns{
    display: flex;
    width: 164px;
    height: 35px;
    border: 1px solid #c6c6c6;
}
.fbtns button{
    flex: 1;
}
.fbtns .fx{
    font-family: "Liberation Serif", serif;
    font-style: italic;
    font-weight: bold;
    font-size: 25px;
    color: #6d6d6d;
}
.fx small{
    font-size: 20px;
}
.finput{
    flex: 1;
    display: flex;
    align-items: flex-start;
    height: 64px;
    margin-left: 4px;
    border: 1px solid #c6c6c6;
}
.finput textarea{
    flex: 1;
    height: 60px;
    border: 0;
    resize: none;
    outline: 0;
    font: inherit;
}
.finput button{
    width: 24px;
    height: 34px;
}

/* feuille */
.sheet{
    flex: 1;
    min-height: 0;
    display: flex;
}
.grid{
    flex: 1;
    overflow: hidden;
    border-right: 1px solid #ababab;
}
table{
    width: 100%;
    table-layout: fixed;
    border-spacing: 0;
}
.c-num{ width: 43px; }
.c-cell{ width: 120px; }
th, td{
    height: 29px;
    padding: 0;
    border: 0 solid #d4d4d4;
    border-width: 0 1px 1px 0;
    font-weight: normal;
    line-height: 26px;
    white-space: nowrap;
}
th{
    padding-top: 2px;
    font-size: 19px;
}
td{
    padding: 2px 0 0 3px;
    color: #000;
    font-size: 20px;
    line-height: 22px;
}
th:last-child, td:last-child{
    border-right: 0;
}
thead th{
    border-bottom-color: #ababab;
}
tbody th{
    padding-right: 2px;
    border-right-color: #ababab;
    text-align: right;
}
th.sel{
    background-color: #e1e1e1;
    color: #217346;
    font-weight: bold;
}
thead .sel{
    padding-top: 1px;
    border-bottom: 2px solid #217346;
}
tbody .sel{
    padding-right: 1px;
    border-right: 2px solid #217346;
}
.corner svg{
    margin-left: auto;
    margin-right: 3px;
}
.ar{
    font-size: 18px;
}
.cursor{
    position: relative;
}
.cursor::before{
    content: "";
    position: absolute;
    inset: -2px;
    border: 2px solid #217346;
}
.cursor::after{
    content: "";
    position: absolute;
    right: -4px;
    bottom: -4px;
    width: 7px;
    height: 7px;
    background-color: #217346;
    border: 1px solid #fff;
    border-width: 1px 0 0 1px;
}
.vscroll{
    width: 30px;
    padding: 1px 3px 0 2px;
    display: flex;
    flex-direction: column;
}
.vscroll button, .hscroll button{
    flex: none;
    width: 25px;
    height: 25px;
    border: 1px solid #c6c6c6;
    background-color: #fff;
}
.track{
    flex: 1;
    background-color: #f1f1f1;
}
.thumb{
    border: 1px solid #ababab;
    background-color: #fff;
}
.vscroll .track{
    display: grid;
    grid-template-rows: 67fr 27px 28fr;
}
.vscroll .thumb{
    grid-row: 2;
}
.sheetbar{
    flex: none;
    display: flex;
    align-items: flex-start;
    height: 34px;
    border-top: 1px solid #ababab;
    background-color: #f5f5f5;
}
.sheetnav{
    display: flex;
    width: 118px;
    height: 34px;
    padding-left: 29px;
    gap: 29px;
}
.sheettab{
    width: 81px;
    height: 31px;
    margin-top: -1px;
    border: 1px solid #ababab;
    border-width: 0 1px 2px;
    border-bottom-color: #217346;
    background-color: #fff;
    color: #217346;
    font-size: 18px;
    font-weight: bold;
    line-height: 30px;
    text-align: center;
}
.add{
    width: 100px;
    height: 32px;
}
.sheetbar .dots{
    margin: 10px 17px 0 auto;
}
.hscroll{
    display: flex;
    width: 723px;
    height: 25px;
    margin: 3px 29px 0 0;
}
.hscroll .track{
    background-color: #e9e9e9;
}
.hscroll .thumb{
    width: 93%;
    height: 25px;
}

/* état */
.statusbar{
    flex: none;
    display: flex;
    align-items: center;
    height: 33px;
    padding: 0 8px 0 7px;
    background-color: #217346;
    color: #fff;
    font-size: 14px;
}
.views{
    display: flex;
    margin-left: auto;
}
.views button{
    width: 45px;
    height: 33px;
}
.views .on{
    background-color: #0a6332;
}
.zoom{
    display: flex;
    align-items: center;
    gap: 4px;
    margin-left: 5px;
}
.zoom input{
    appearance: none;
    width: 151px;
    height: 18px;
    margin: 0;
    background: linear-gradient(#fff, #fff) no-repeat center / 100% 1px;
}
.zoom input::-webkit-slider-thumb{
    appearance: none;
    width: 6px;
    height: 17px;
    background-color: #fff;
}
.pc{
    width: 62px;
    text-align: right;
    font-size: 15px;
}

/* barre des tâches */
.taskbar{
    flex: none;
    display: flex;
    align-items: center;
    height: 60px;
    background: linear-gradient(90deg, #3a3735 0, #353231 26%, #232325 36%, #202022 69%, #3b3837 77%, #403c3b 100%);
    color: #fff;
    font-size: 17px;
    white-space: nowrap;
}
.start{
    width: 72px;
}
.search{
    display: flex;
    align-items: center;
    width: 432px;
    height: 60px;
    padding-left: 16px;
    border: 2px solid #c0c0c0;
    background-color: #f1f1f1;
}
.search input{
    flex: 1;
    padding: 2px 0 0 17px;
    border: 0;
    outline: 0;
    background: none;
    font: inherit;
    font-size: 21px;
}
.search input::placeholder{
    color: #333;
}
.taskview{
    width: 75px;
}
.apps{
    display: flex;
}
.apps button{
    width: 75px;
    height: 60px;
    background: no-repeat center bottom / 61px 3px;
}
.apps .open{
    background-image: linear-gradient(#76b9ed, #76b9ed);
}
.apps .more{
    background-image: linear-gradient(90deg, #76b9ed 47px, #4a7398 47px);
}
.apps .current{
    background-color: #4f4f4f;
    background-size: 75px 3px;
}
.stock{
    margin-left: auto;
    font-size: 20px;
}
.stock b{
    margin-left: 8px;
    color: #e8523f;
    font-weight: normal;
}
.tray{
    display: flex;
    align-items: center;
    gap: 15px;
    margin-left: 43px;
}
.lang{
    font-size: 17px;
    margin-left: 2px;
}
.clock{
    display: flex;
    flex-direction: column;
    align-items: center;
    line-height: 28px;
    margin: -2px 0 0 6px;
}
.tray button:first-child{
    margin-right: 2px;
}
.tray .lang + .clock{
    margin-left: 8px;
}
.notif{
    position: relative;
    width: 46px;
    margin-left: 4px;
}
.notif b{
    position: absolute;
    left: 22px;
    top: 12px;
    width: 25px;
    height: 25px;
    border: 1px solid #999;
    border-radius: 50%;
    background-color: #3b3838;
    font-size: 16px;
    line-height: 23px;
}
.desktop{
    width: 1px;
    height: 60px;
    margin: 0 6px 0 19px;
    background-color: #8a8a8a;
}

/* filigrane */
.watermark{
    position: absolute;
    left: 50%;
    bottom: 24px;
    width: 230px;
    display: flex;
    flex-direction: column;
    align-items: center;
    gap: 6px;
    transform: translateX(-50%);
    color: #999;
    opacity: 0.5;
    pointer-events: none;
}
.wm-ar{
    font-size: 64px;
    font-weight: bold;
    line-height: 60px;
}
.wm-la{
    font-family: "Liberation Sans", sans-serif;
    font-size: 41px;
    line-height: 40px;
}
```
